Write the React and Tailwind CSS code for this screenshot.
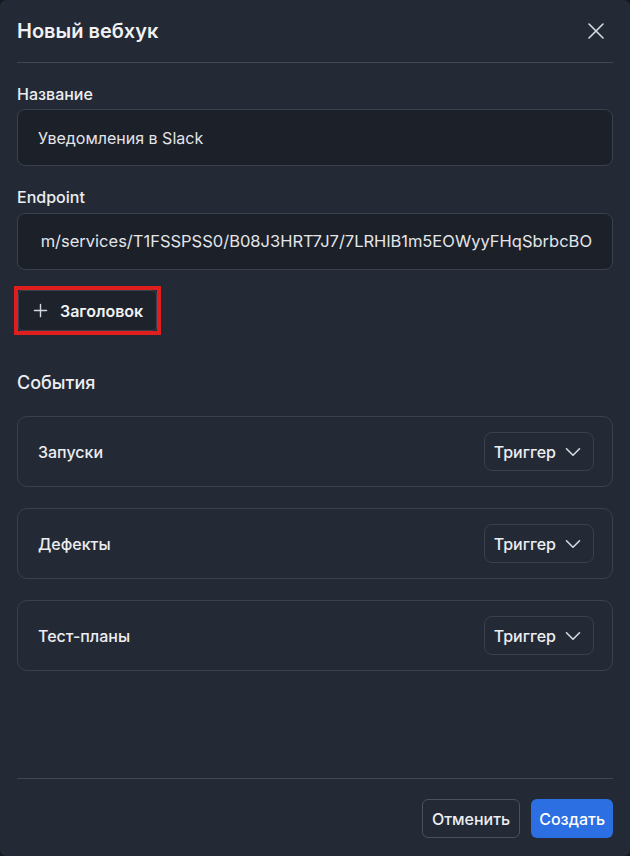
import { X, Plus, ChevronDown } from "lucide-react";

const events = ["Запуски", "Дефекты", "Тест-планы"];

const EventRow = ({ label }) => (
  <div className="flex items-center justify-between border border-[#3a404c] rounded-[10px] pl-5 pr-[18px] py-[15px]">
    <span className="text-[16px] font-medium text-[#eceef1]">{label}</span>
    <button className="h-[39px] flex items-center gap-[4px] pl-[9px] pr-[7px] border border-[#3a404c] rounded-[8px] text-[16px] font-medium text-[#eceef1]">
      Триггер
      <ChevronDown className="w-[26px] h-[26px] text-[#d5d8de]" strokeWidth={1.5} />
    </button>
  </div>
);

export default function App() {
  return (
    <div className="min-h-screen bg-[#14171c]" style={{ fontFamily: "Inter, 'Noto Sans', sans-serif" }}>
      <div className="h-[856px] w-[630px] bg-[#242a35] rounded-[6px] flex flex-col px-[17px]">
        <div className="h-[63px] flex items-center justify-between border-b border-[#404654]">
          <h2 className="text-[20px] font-semibold text-[#f0f1f3]">Новый вебхук</h2>
          <X className="w-[28px] h-[28px] text-[#d5d8de] mr-[3px]" strokeWidth={1.4} />
        </div>

        <div className="flex-1 flex flex-col pt-[21px]">
          <div className="flex flex-col gap-[5px]">
            <label className="text-[16px] font-medium leading-5 text-[#eceef1]">Название</label>
            <div className="h-[57px] flex items-center px-5 bg-[#1c2029] border border-[#3a404c] rounded-[8px] text-[16px] text-[#e3e5e9]">
              Уведомления в Slack
            </div>
          </div>

          <div className="flex flex-col gap-[6px] mt-[21px]">
            <label className="text-[16px] font-medium leading-5 text-[#eceef1]">Endpoint</label>
            <div className="h-[57px] flex items-center justify-end pr-5 bg-[#1c2029] border border-[#3a404c] rounded-[8px] text-[16.5px] text-[#e3e5e9] whitespace-nowrap">
              m/services/T1FSSPSS0/B08J3HRT7J7/7LRHlB1m5EOWyyFHqSbrbcBO
            </div>
          </div>

          <div className="mt-[16px] -ml-[3px] self-start border-[4px] border-[#e01e1e]">
            <button className="h-[41px] flex items-center gap-[9px] pl-[11px] pr-[13px] border border-[#3a404c] rounded-[5px] bg-[#1d222b] text-[16px] font-semibold text-[#f0f1f3]">
              <Plus className="w-[21px] h-[21px] text-[#d5d8de]" strokeWidth={1.6} />
              Заголовок
            </button>
          </div>

          <h3 className="mt-[36px] text-[18px] font-medium leading-6 text-[#eceef1]">События</h3>

          <div className="mt-[21px] flex flex-col gap-[21px]">
            {events.map((e) => (
              <EventRow key={e} label={e} />
            ))}
          </div>
        </div>

        <div className="border-t border-[#404654] pt-[20px] pb-[18px] flex justify-end gap-[11px]">
          <button className="h-[39px] px-[9px] border border-[#4a505c] rounded-[6px] text-[16px] font-medium text-[#eceef1]">
            Отменить
          </button>
          <button className="h-[39px] px-[8px] bg-[#2c6fe3] rounded-[6px] text-[16px] font-medium text-white">
            Создать
          </button>
        </div>
      </div>
    </div>
  );
}
